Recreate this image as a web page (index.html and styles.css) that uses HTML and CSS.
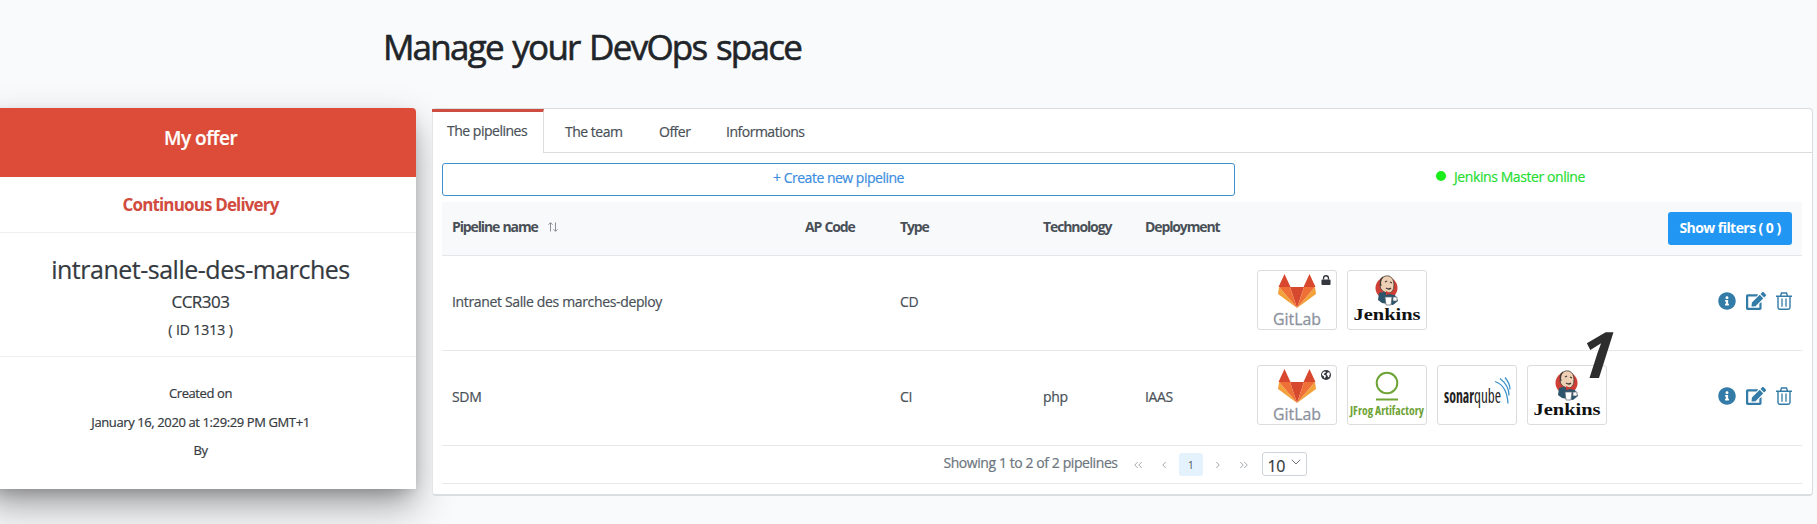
FILE: index.html
```
<!DOCTYPE html>
<html lang="en">
<head>
<meta charset="utf-8">
<title>Manage your DevOps space</title>
<link rel="stylesheet" href="styles.css">
</head>
<body>
<svg class="sprite" width="0" height="0">
  <symbol id="gitlab" viewBox="0 0 80 60">
    <path fill="#d8482f" d="M21.500 17 27.500 4l6 13zM46.500 17l6-13 6 13z"/>
    <path fill="#d6492f" d="M33 17h14l-7 21z"/>
    <path fill="#ee7037" d="M22 17h11l7 21zM58 17H47l-7 21z"/>
    <path fill="#f3a13a" d="M22 17 21 24l19 14zM58 17l1 7-19 14z"/>
  </symbol>
  <symbol id="jenkins" viewBox="0 0 80 60">
    <circle cx="39.500" cy="18" r="11" fill="#cf3f36"/>
    <path fill="#2d566d" d="M32 23q8-3 16 2l3 6-5 4-11-2-4-3z"/>
    <path fill="#eed0b4" stroke="#443b37" stroke-width=".8" d="M34 10q2-5 8-4 5 2 5 9 0 8-6 8-7-1-8-7z"/>
    <path fill="none" stroke="#443b37" stroke-width="1.300" d="M34 16q-2-6 2-9M38 12l2-1M43 12l2 1M39 18q3 2 5 0"/>
    <path fill="#d03a32" d="m39 21 4 2 4-2v4l-4-1-4 1z"/>
    <path fill="#fff" stroke="#5d6670" stroke-width=".7" d="M38 27h7l-1 8h-5zM46 27h4v4h-4z"/>
  </symbol>
  <symbol id="lock" viewBox="0 0 10 11"><path fill="#34383e" d="M1 5h8q1 0 1 1v4q0 1-1 1H1q-1 0-1-1V6q0-1 1-1z"/><path fill="none" stroke="#34383e" stroke-width="1.500" d="M2.300 5V3.500q0-2.700 2.700-2.700t2.700 2.700V5"/></symbol>
  <symbol id="globe" viewBox="0 0 10 10"><circle cx="5" cy="5" r="5" fill="#34383e"/><path fill="#fff" d="M1.200 3.200 3 1.500l2 .2-.7 1.300-1.500.8.2 1 2 .6-.3 1.600L3.500 8.500 2.800 6.200 1 5zM6.500 2.500l1.700-.3 1 2.200-1 .4.3 1.500L7.200 7.500l-.8-2-1-.9z"/></symbol>
  <symbol id="info" viewBox="0 0 512 512"><path fill="#337ca8" d="M256 8C119 8 8 119 8 256s111 248 248 248 248-111 248-248S393 8 256 8zm0 110c23 0 42 19 42 42s-19 42-42 42-42-19-42-42 19-42 42-42zm56 254c0 7-5 12-12 12h-88c-7 0-12-5-12-12v-24c0-7 5-12 12-12h12v-64h-12c-7 0-12-5-12-12v-24c0-7 5-12 12-12h64c7 0 12 5 12 12v100h12c7 0 12 5 12 12v24z"/></symbol>
  <symbol id="edit" viewBox="0 0 576 512"><path fill="#337ca8" d="m402.600 83.200 90.200 90.200c3.800 3.800 3.800 10 0 13.800L274.400 405.600l-92.800 10.300c-12.400 1.400-22.900-9.100-21.500-21.500l10.300-92.800L388.800 83.200c3.800-3.800 10-3.800 13.800 0zm162-22.900-48.800-48.800c-15.200-15.200-39.900-15.200-55.200 0l-35.400 35.400c-3.800 3.800-3.800 10 0 13.800l90.200 90.200c3.800 3.800 10 3.800 13.800 0l35.400-35.400c15.200-15.300 15.200-40 0-55.200zM384 346.200V448H64V128h229.800c3.200 0 6.200-1.300 8.500-3.500l40-40c7.600-7.600 2.200-20.500-8.500-20.500H48C21.500 64 0 85.500 0 112v352c0 26.500 21.500 48 48 48h352c26.500 0 48-21.500 48-48V306.200c0-10.700-12.900-16-20.500-8.500l-40 40c-2.200 2.300-3.500 5.300-3.500 8.500z"/></symbol>
  <symbol id="trash" viewBox="0 0 16 18"><path fill="none" stroke="#337ca8" stroke-width="1.400" d="M0 4.200h16M4.500 4 5.500 1h5l1 3M2 4.500v11q0 1.700 1.700 1.700h8.600q1.700 0 1.700-1.700v-11"/><path stroke="#337ca8" stroke-width="1.300" d="M6 6.500v8.300M10 6.500v8.300"/></symbol>
</svg>
<h1 class="page-title">Manage your DevOps space</h1>
<main class="layout">
  <aside class="offer">
    <div class="offer-head">My offer</div>
    <div class="offer-kind">Continuous Delivery</div>
    <div class="offer-project">
      <div class="project-name">intranet-salle-des-marches</div>
      <div class="project-code">CCR303</div>
      <div class="project-id">( ID 1313 )</div>
    </div>
    <div class="offer-meta">
      <div>Created on</div>
      <div>January 16, 2020 at 1:29:29 PM GMT+1</div>
      <div>By</div>
    </div>
  </aside>
  <section class="panel">
    <nav class="tabs">
      <a class="tab active">The pipelines</a>
      <a class="tab t-team">The team</a>
      <a class="tab t-offer">Offer</a>
      <a class="tab t-info">Informations</a>
    </nav>
    <div class="panel-body">
      <div class="toolbar">
        <button class="create">+ Create new pipeline</button>
        <div class="status"><span class="dot"></span><span>Jenkins Master online</span></div>
      </div>
      <div class="row head">
        <div>Pipeline name<svg class="sort" viewBox="0 0 10 10"><path d="M2.500 9.500V.7M.5 2.700l2-2 2 2M7.500.5v8.800M5.500 7.300l2 2 2-2"/></svg></div>
        <div>AP Code</div>
        <div>Type</div>
        <div>Technology</div>
        <div>Deployment</div>
        <div class="end"><button class="filters">Show filters ( 0 )</button></div>
      </div>
      <div class="row">
        <div>Intranet Salle des marches-deploy</div>
        <div></div>
        <div>CD</div>
        <div></div>
        <div></div>
        <div class="end">
          <div class="tools">
            <div class="tool"><svg class="logo"><use href="#gitlab"/><text x="40" y="55" text-anchor="middle" textLength="48" lengthAdjust="spacingAndGlyphs" class="logo-gitlab">GitLab</text></svg><svg class="badge"><use href="#lock"/></svg></div>
            <div class="tool"><svg class="logo"><use href="#jenkins"/><text x="40" y="50" text-anchor="middle" textLength="67" lengthAdjust="spacingAndGlyphs" class="logo-jenkins">Jenkins</text></svg></div>
          </div>
          <div class="actions"><svg class="i-info"><use href="#info"/></svg><svg class="i-edit"><use href="#edit"/></svg><svg class="i-trash"><use href="#trash"/></svg></div>
        </div>
      </div>
      <div class="row">
        <div>SDM</div>
        <div></div>
        <div>CI</div>
        <div>php</div>
        <div>IAAS</div>
        <div class="end">
          <div class="tools">
            <div class="tool"><svg class="logo"><use href="#gitlab"/><text x="40" y="55" text-anchor="middle" textLength="48" lengthAdjust="spacingAndGlyphs" class="logo-gitlab">GitLab</text></svg><svg class="badge"><use href="#globe"/></svg></div>
            <div class="tool"><svg class="logo"><circle cx="40" cy="18" r="10.300" fill="none" stroke="#6ea335" stroke-width="2"/><path d="M29 34.500h22" stroke="#6ea335" stroke-width="2"/><text x="40" y="50" text-anchor="middle" textLength="74" lengthAdjust="spacingAndGlyphs" class="logo-jfrog">JFrog Artifactory</text></svg></div>
            <div class="tool"><svg class="logo"><text x="7" y="38" textLength="30" lengthAdjust="spacingAndGlyphs" class="logo-sonar bold">sonar</text><text x="37" y="38" textLength="27" lengthAdjust="spacingAndGlyphs" class="logo-sonar">qube</text><path fill="none" stroke="#3d92c9" stroke-width="1.300" d="M58 16.500q12 4 13 22M63 13.500q9 7 9 17M68 12.500q5 6 5 12"/></svg></div>
            <div class="tool"><svg class="logo"><use href="#jenkins"/><text x="40" y="50" text-anchor="middle" textLength="67" lengthAdjust="spacingAndGlyphs" class="logo-jenkins">Jenkins</text></svg><span class="marker">1</span></div>
          </div>
          <div class="actions"><svg class="i-info"><use href="#info"/></svg><svg class="i-edit"><use href="#edit"/></svg><svg class="i-trash"><use href="#trash"/></svg></div>
        </div>
      </div>
      <div class="pager">
        <span class="summary">Showing 1 to 2 of 2 pipelines</span>
        <svg class="chev" viewBox="0 0 24 24"><path d="m11.500 9-3 3 3 3M15.500 9l-3 3 3 3"/></svg>
        <svg class="chev" viewBox="0 0 24 24"><path d="m13.500 9-3 3 3 3"/></svg>
        <span class="page">1</span>
        <svg class="chev" viewBox="0 0 24 24"><path d="m11 9 3 3-3 3"/></svg>
        <svg class="chev" viewBox="0 0 24 24"><path d="m9 9 3 3-3 3M13 9l3 3-3 3"/></svg>
        <span class="size"><span>10</span><svg viewBox="0 0 10 6"><path d="m.7.700 4.300 4.300 4.300-4.300"/></svg></span>
      </div>
    </div>
  </section>
</main>
</body>
</html>
```
FILE: styles.css
```
* { box-sizing: border-box; }
body {
  margin: 0;
  height: 524px;
  overflow: hidden;
  background: #f9fafc;
  color: #495057;
  font-family: "Open Sans", "Noto Sans", sans-serif;
  font-size: 14px;
  font-weight: 500;
  letter-spacing: -.035em;
  -webkit-text-stroke: .2px currentColor;
}
.sprite { display: block; position: absolute; }
.page-title {
  margin: 0;
  width: 1184px;
  height: 108px;
  line-height: 94px;
  text-align: center;
  color: #212529;
  font-size: 35px;
  font-weight: 500;
  letter-spacing: -.05em;
  word-spacing: .06em;
  -webkit-text-stroke-width: .6px;
}
.layout { display: flex; align-items: flex-start; margin-left: -15px; gap: 16px; }

.offer {
  width: 431px;
  height: 381px;
  background: #fff;
  border-radius: 4px 4px 0 0;
  box-shadow: 0 19px 40px rgba(0,0,0,.3), 0 12px 20px -8px rgba(0,0,0,.25), 0 2px 10px rgba(0,0,0,.06);
  text-align: center;
  color: #343a40;
}
.offer-head { height: 69px; line-height: 61px; background: #dc4c39; border-radius: 4px 4px 0 0; color: #fff; font-size: 19px; font-weight: 600; }
.offer-kind { height: 56px; line-height: 55px; border-bottom: 1px solid #efefef; color: #d14b3f; font-size: 17px; font-weight: 700; letter-spacing: -.05em; -webkit-text-stroke-width: 0; }
.offer-project { height: 124px; padding-top: 17px; border-bottom: 1px solid #efefef; }
.project-name { height: 39px; line-height: 38px; font-size: 25px; font-weight: 400; }
.project-code { height: 25px; line-height: 26px; font-size: 17px; }
.project-id { height: 31px; line-height: 31px; font-size: 14px; letter-spacing: -.005em; }
.offer-meta { padding-top: 22px; line-height: 28.500px; font-size: 13px; letter-spacing: -.03em; }

.panel { position: relative; width: 1381px; height: 388px; background: #fff; border: 1px solid #dadcde; border-left-color: #e4e5e7; border-bottom: 2px solid #dadde0; border-radius: 4px; }
.tabs { display: flex; height: 44px; margin-left: -1px; line-height: 45px; }
.tab { flex: none; border-bottom: 1px solid #dadcde; }
.tab.active { width: 112px; padding-left: 15px; border-top: 3px solid #cf4d40; border-right: 1px solid #dadcde; border-bottom: 0; line-height: 37px; }
.t-team { width: 94px; padding-left: 21px; }
.t-offer { width: 67px; padding-left: 21px; }
.t-info { flex: 1; padding-left: 21px; }
.panel-body { padding: 10px 10px 0 9px; }
.toolbar { display: flex; height: 39px; }
.create { width: 793px; height: 33px; padding: 0 0 4px; background: #fff; border: 1px solid #3f8fca; border-radius: 3px; color: #3c8de0; font: inherit; letter-spacing: inherit; }
.status { display: flex; flex: 1; justify-content: center; align-items: center; gap: 8px; height: 26px; padding-right: 16px; color: #25dd32; letter-spacing: -.03em; }
.dot { width: 10px; height: 10px; border-radius: 50%; background: #1aee1a; }
.row { display: grid; grid-template-columns: 353px 95px 143px 102px 112px 1fr; align-items: center; height: 95px; padding-bottom: 3px; border-bottom: 1px solid #e6e8ea; letter-spacing: -.025em; }
.row > div { padding-left: 10px; white-space: nowrap; }
.row.head { height: 54px; padding: 0; background: #f8f9fb; border-color: #e4e7ea; font-weight: 700; letter-spacing: -.08em; word-spacing: .05em; -webkit-text-stroke-width: 0; }
.head > div { padding-bottom: 4px; }
.sort { width: 10px; height: 10px; margin-left: 10px; fill: none; stroke: #8a8f94; stroke-width: 1; }
.row > .end { display: flex; justify-content: flex-end; padding: 0 10px; }
.filters { width: 124px; height: 33px; padding: 0 0 3px; border: 0; border-radius: 3px; background: #2196f3; color: #fff; font: inherit; letter-spacing: -.04em; }
.tools { display: flex; gap: 10px; margin: -4px auto 0 0; }
.tool { position: relative; width: 80px; height: 60px; border: 1px solid #dadcde; border-radius: 3px; background: #fff; }
.logo { display: block; width: 80px; height: 60px; margin: -1px; letter-spacing: 0; -webkit-text-stroke-width: 0; }
.badge { position: absolute; top: 4px; right: 5px; width: 10px; height: 10px; }
.marker { position: absolute; right: -9px; top: -44px; color: #2d2d2d; font: italic 700 64px/64px "Open Sans", sans-serif; transform: skewX(-6deg); -webkit-text-stroke-width: 0; }
.logo-gitlab { font: 400 16px "Open Sans", sans-serif; fill: #8c929d; stroke: #8c929d; stroke-width: .3; }
.logo-jenkins { font: 700 16px "Liberation Serif", serif; fill: #111; }
.logo-jfrog { font: 700 12px "Open Sans", sans-serif; font-stretch: 75%; fill: #6ea335; }
.logo-sonar { font: 400 19px "Open Sans", sans-serif; font-stretch: 75%; fill: #222; }
.logo-sonar.bold { font-weight: 700; }
.actions { display: flex; align-items: center; margin-top: -2px; }
.i-info { width: 18px; height: 18px; margin-right: 10px; }
.i-edit { width: 20px; height: 18px; margin-right: 10px; }
.i-trash { width: 16px; height: 18px; }
.pager { display: flex; align-items: center; justify-content: center; height: 38px; border-bottom: 1px solid #e6e8ea; color: #6c757d; letter-spacing: -.03em; }
.summary { margin: 0 7px 4px 6px; }
.chev { width: 26.500px; height: 24px; fill: none; stroke: #a5a9ad; stroke-width: 1; }
.page { width: 24px; height: 23px; margin: 0 1px; line-height: 24px; border-radius: 3px; background: #e3f2fd; color: #495057; font-size: 10px; text-align: center; -webkit-text-stroke-width: 0; }
.size { display: flex; align-items: center; width: 45px; height: 24px; margin: -2px 0 0 5px; padding: 0 5px; border: 1px solid #ced4da; border-radius: 3px; color: #343a40; font-size: 16px; }
.size span { padding-top: 5px; }
.size svg { flex: none; width: 10px; height: 6px; margin: -3px 0 0 6px; fill: none; stroke: #6c757d; }
```
